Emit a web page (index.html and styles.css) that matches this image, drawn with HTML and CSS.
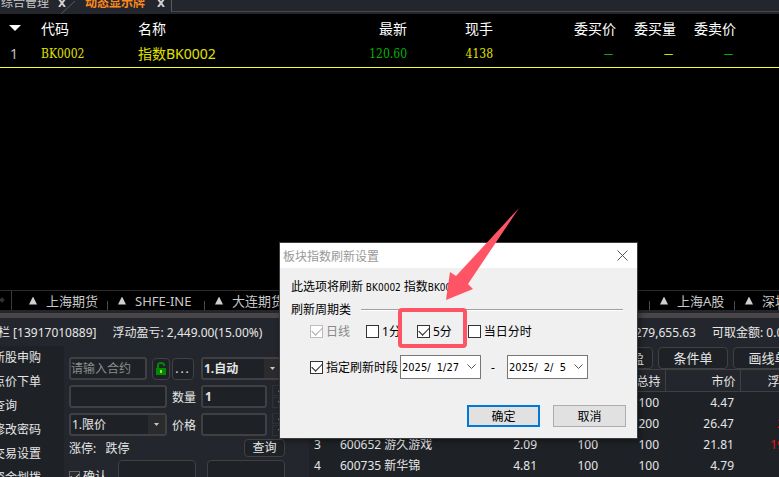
FILE: index.html
```
<!DOCTYPE html>
<html lang="zh-CN">
<head>
    <meta charset="UTF-8">
    <meta name="viewport" content="width=device-width, initial-scale=1.0">
    <title>动态显示牌</title>
    <link rel="stylesheet" href="styles.css">
</head>
<body>
    <div class="terminal">
        <nav class="top-tabs">
            <a href="#" class="top-tab">综合管理</a>
            <button class="tab-close" aria-label="关闭综合管理"><svg width="8" height="8" viewBox="0 0 8 8"><path d="M1 0l6 8M7 0L1 8"/></svg></button>
            <svg class="slant" width="16" height="13" viewBox="0 0 16 13"><path d="M1 13L15 0"/></svg>
            <a href="#" class="top-tab active">动态显示牌</a>
            <button class="tab-close" aria-label="关闭动态显示牌"><svg width="8" height="8" viewBox="0 0 8 8"><path d="M1 0l6 8M7 0L1 8"/></svg></button>
            <span class="tabs-rest"></span>
        </nav>

        <main class="board">
            <table class="quotes">
                <colgroup>
                    <col class="q-index"><col class="q-code"><col class="q-name"><col class="q-last"><col class="q-hand"><col class="q-bid"><col class="q-vol"><col class="q-vol"><col>
                </colgroup>
                <thead>
                    <tr>
                        <th><svg width="12" height="6" viewBox="0 0 12 6"><path d="M0 0h12L6 6z" fill="#fff"/></svg></th>
                        <th>代码</th>
                        <th>名称</th>
                        <th class="num">最新</th>
                        <th class="num">现手</th>
                        <th class="num">委买价</th>
                        <th class="num">委买量</th>
                        <th class="num">委卖价</th>
                        <th></th>
                    </tr>
                </thead>
                <tbody>
                    <tr>
                        <td class="index">1</td>
                        <td class="yellow digits">BK0002</td>
                        <td class="yellow">指数BK0002</td>
                        <td class="num green digits">120.60</td>
                        <td class="num yellow digits">4138</td>
                        <td class="num green dash">—</td>
                        <td class="num yellow dash">—</td>
                        <td class="num green dash">—</td>
                        <td></td>
                    </tr>
                </tbody>
            </table>
        </main>

        <nav class="markets">
            <span class="scroll-arrow"></span>
            <a href="#" class="market first">上海期货</a>
            <a href="#" class="market">SHFE-INE</a>
            <a href="#" class="market">大连期货</a>
            <span class="fill"></span>
            <a href="#" class="market">行业</a>
            <a href="#" class="market short">上海A股</a>
            <a href="#" class="market last">深圳A股</a>
        </nav>

        <div class="account">
            <span>栏 [13917010889]</span>
            <span>浮动盈亏: 2,449.00(15.00%)</span>
            <span class="fill"></span>
            <span>279,655.63</span>
            <span class="available">可取金额: 0.00</span>
        </div>

        <div class="trade">
            <nav class="side-menu">
                <a href="#">新股申购</a>
                <a href="#">点价下单</a>
                <a href="#">查询</a>
                <a href="#">修改密码</a>
                <a href="#">交易设置</a>
                <a href="#">资金划拨</a>
            </nav>

            <form class="order">
                <div class="order-row">
                    <input class="contract" type="text" placeholder="请输入合约" aria-label="合约">
                    <button type="button" class="small-btn lock" aria-label="锁定">
                        <svg width="12" height="14" viewBox="0 0 12 14"><path d="M3 7V3q0-2 3-2t3 2v1" fill="none" stroke="#008a00" stroke-width="2"/><path d="M1 6h10v7H1z" fill="#008a00"/><path d="M5 8h2v3H5z" fill="#a6d83c"/></svg>
                    </button>
                    <button type="button" class="small-btn more">...</button>
                    <span class="drop wide">
                        <select aria-label="开平"><option>1.自动</option></select>
                        <svg width="5" height="3" viewBox="0 0 5 3"><path d="M0 0h5L2.500 3z"/></svg>
                    </span>
                </div>
                <div class="order-row">
                    <input class="field" type="text" aria-label="名称">
                    <label for="amount">数量</label>
                    <input id="amount" class="value" type="text" value="1">
                    <span class="spinner"><button type="button" aria-label="增加数量"></button><button type="button" class="down" aria-label="减少数量"></button></span>
                </div>
                <div class="order-row">
                    <span class="drop">
                        <select aria-label="价格类型"><option>1.限价</option></select>
                        <svg width="5" height="3" viewBox="0 0 5 3"><path d="M0 0h5L2.500 3z"/></svg>
                    </span>
                    <label for="price">价格</label>
                    <input id="price" class="value" type="text">
                    <span class="spinner"><button type="button" aria-label="提高价格"></button><button type="button" class="down" aria-label="降低价格"></button></span>
                </div>
                <div class="limits">
                    <span>涨停:&nbsp;&nbsp; 跌停</span>
                    <button type="button" class="outline-btn">查询</button>
                </div>
                <div class="actions">
                    <label class="confirm"><input type="checkbox" checked>确认</label>
                    <button type="button" class="outline-btn" aria-label="买入"></button>
                    <button type="button" class="outline-btn" aria-label="卖出"></button>
                </div>
            </form>

            <section class="positions">
                <div class="toolbar">
                    <button class="outline-btn">止损止盈</button>
                    <button class="outline-btn">条件单</button>
                    <button class="outline-btn">画线单</button>
                </div>
                <table class="holdings">
                    <colgroup>
                        <col class="h-index"><col class="h-name"><col class="h-cost"><col class="h-count"><col class="h-count"><col class="h-price"><col class="h-price">
                    </colgroup>
                    <thead>
                        <tr><th></th><th></th><th></th><th></th><th>总持</th><th>市价</th><th>浮盈</th></tr>
                    </thead>
                    <tbody>
                        <tr><td></td><td></td><td></td><td></td><td>100</td><td>4.47</td><td></td></tr>
                        <tr><td></td><td></td><td></td><td></td><td>200</td><td>26.47</td><td class="red">2.00</td></tr>
                        <tr><td>3</td><td>600652 游久游戏</td><td>2.09</td><td>100</td><td>100</td><td>21.81</td><td class="red">19.72</td></tr>
                        <tr><td>4</td><td>600735 新华锦</td><td>4.81</td><td>100</td><td>100</td><td>4.79</td><td></td></tr>
                    </tbody>
                </table>
            </section>
        </div>
    </div>

    <div class="dialog" role="dialog" aria-labelledby="dialogTitle">
        <div class="dialog-title">
            <span id="dialogTitle">板块指数刷新设置</span>
            <button class="dialog-close" aria-label="关闭"><svg width="11" height="11" viewBox="0 0 11 11"><path d="M.5.5l10 10M10.500.5l-10 10"/></svg></button>
        </div>
        <form class="dialog-body">
            <p>此选项将刷新<span class="latin"> BK0002 </span>指数<span class="latin">BK0002</span></p>
            <div class="group-title"><span>刷新周期类</span><hr></div>
            <div class="periods">
                <label class="disabled"><input type="checkbox" checked disabled>日线</label>
                <label><input type="checkbox">1分</label>
                <label><input type="checkbox" checked>5分</label>
                <label><input type="checkbox">当日分时</label>
            </div>
            <div class="range">
                <label><input type="checkbox" checked>指定刷新时段</label>
                <span class="date">
                    <select aria-label="开始日期"><option>2025/&nbsp; 1/27</option></select>
                    <svg width="9" height="6" viewBox="0 0 9 6"><path d="M.5.5l4 4 4-4"/></svg>
                </span>
                <span class="to">-</span>
                <span class="date">
                    <select aria-label="结束日期"><option>2025/&nbsp; 2/&nbsp; 5</option></select>
                    <svg width="9" height="6" viewBox="0 0 9 6"><path d="M.5.5l4 4 4-4"/></svg>
                </span>
            </div>
            <div class="dialog-buttons">
                <button type="button" class="primary">确定</button>
                <button type="button">取消</button>
            </div>
        </form>
        <svg class="marker" width="122" height="142" viewBox="0 0 122 142">
            <path d="M121 0L58 68l-6-4-4 28 27-11-5-5z" fill="#ff5465"/>
            <rect x="2" y="102" width="65" height="36" rx="2" fill="none" stroke="#ff5465" stroke-width="4"/>
        </svg>
    </div>
</body>
</html>
```

FILE: styles.css
```
* {
    margin: 0;
    padding: 0;
    box-sizing: border-box;
}

body {
    font-family: "Noto Sans", "Noto Sans CJK SC", sans-serif;
    font-size: 12px;
    background-color: #000;
    color: #e6e6e6;
    overflow: hidden;
}

a {
    color: inherit;
    text-decoration: none;
}

button,
input,
select {
    font: inherit;
    color: inherit;
    border-radius: 0;
}

.terminal {
    display: flex;
    flex-direction: column;
    height: 100vh;
    white-space: nowrap;
    overflow: hidden;
}

.fill {
    flex: 1;
}

/* page tabs */
.top-tabs {
    display: flex;
    align-items: flex-end;
    flex: none;
    height: 14px;
    background-color: #23262c;
    overflow: hidden;
}

.top-tab {
    line-height: 18px;
    margin-bottom: 2px;
    padding-left: 1px;
    color: #c8c8c8;
}

.top-tab.active {
    margin-left: 8px;
    color: #ff8a1c;
    font-weight: bold;
}

.tab-close {
    width: 8px;
    height: 8px;
    margin: 0 0 7px 9px;
    border: none;
    background: none;
    line-height: 0;
}

.active + .tab-close {
    margin-left: 12px;
}

.tab-close path {
    fill: none;
    stroke: #d0d0d0;
    stroke-width: 2;
}

.slant {
    margin-left: -6px;
}

.slant path {
    fill: none;
    stroke: #5c5a5e;
}

.tabs-rest {
    flex: 1;
    height: 20px;
    margin: 0 0 2px 6px;
    border-left: 1px solid #5c5a5e;
    border-bottom: 1px solid #4a484c;
}

/* quote board */
.board {
    flex: 1;
    min-height: 0;
    overflow: hidden;
}

table {
    border-collapse: collapse;
    table-layout: fixed;
}

.quotes {
    width: 100%;
    font-size: 14px;
}

.q-index { width: 41px; }
.q-code { width: 97px; }
.q-name { width: 162px; }
.q-last { width: 107px; }
.q-hand { width: 86px; }
.q-bid { width: 123px; }
.q-vol { width: 60px; }

.quotes th {
    height: 28px;
    font-weight: normal;
    text-align: left;
    color: #fff;
}

.quotes th:first-child {
    padding-left: 9px;
}

.quotes th svg {
    display: block;
}

.quotes td {
    height: 25px;
    line-height: 20px;
    border-bottom: 1px solid #ffff22;
}

.quotes .num {
    text-align: right;
}

.quotes .index {
    padding-left: 10px;
    color: #c0c0c0;
}

.quotes .digits {
    font-family: "DejaVu Serif Condensed", "DejaVu Serif", serif;
    font-size: 12px;
}

.quotes .dash {
    padding-right: 3px;
    font-size: 9px;
    font-weight: bold;
}

.yellow { color: #e0e000; }
.green { color: #00b400; }
.holdings .red { color: #f01414; }

/* market tabs */
.markets {
    display: flex;
    flex: none;
    height: 23px;
    border-top: 1px solid #2c2c2c;
    border-bottom: 3px solid #23262c;
    font-size: 13px;
    line-height: 18px;
    color: #c8c8c8;
}

.scroll-arrow {
    width: 11px;
    height: 19px;
}

.scroll-arrow::before {
    content: "";
    display: block;
    width: 4px;
    height: 4px;
    margin-top: 7px;
    transform: rotate(45deg);
    background-color: #333;
}

.market {
    display: flex;
    align-items: center;
    gap: 9px;
    min-width: 97px;
    padding: 0 9px 0 10px;
    background: linear-gradient(#4a4a4a, #4a4a4a) right bottom / 1px 9px no-repeat;
}

.market.first {
    padding-left: 17px;
    border-left: 1px solid #3a3a3a;
}

.market.short {
    min-width: 85px;
}

.market.last {
    width: 44px;
    min-width: 0;
    overflow: hidden;
}

.market::before {
    content: "";
    flex: none;
    width: 8px;
    height: 8px;
    background-color: #d0d0d0;
    clip-path: polygon(50% 0, 100% 100%, 0 100%);
}

/* account line */
.account {
    display: flex;
    align-items: center;
    gap: 16px;
    flex: none;
    height: 33px;
    border-top: 5px solid #4a4648;
    background-color: #23262c;
}

.account span:first-child {
    margin-left: -2px;
}

.account .fill {
    margin: 0 -16px;
}

.available {
    width: 67px;
    overflow: hidden;
}

/* trade area */
.trade {
    display: flex;
    flex: none;
    height: 131px;
    background-color: #23262c;
    overflow: hidden;
}

.side-menu {
    display: flex;
    flex-direction: column;
    flex: none;
    width: 71px;
    margin-left: -7px;
    background-color: #1e2226;
}

.side-menu a {
    flex: none;
    line-height: 24px;
}

.order {
    display: flex;
    flex-direction: column;
    gap: 5px;
    flex: none;
    width: 245px;
    padding: 11px 22px 0 5px;
}

.order-row {
    display: flex;
    align-items: center;
    flex: none;
    gap: 5px;
    height: 23px;
}

.order input[type="text"],
.drop {
    height: 23px;
    border: 2px solid #403f41;
    border-radius: 3px;
    background-color: #1e2226;
}

.order input::placeholder {
    color: #8c8c8c;
    opacity: 1;
}

.order .contract {
    width: 78px;
}

.field,
.drop {
    width: 98px;
}

.order-row label {
    width: 24px;
}

.order-row .value {
    width: 66px;
    padding-left: 2px;
    font-weight: bold;
}

.small-btn,
.outline-btn {
    border: 1px solid #414042;
    border-radius: 4px;
    background-color: #1e2226;
}

.small-btn {
    width: 22px;
    height: 22px;
}

.small-btn.lock {
    width: 18px;
    line-height: 0;
}

.small-btn.more {
    margin-left: -3px;
    letter-spacing: 2px;
}

.drop {
    display: flex;
    align-items: center;
    flex: none;
}

.drop.wide {
    width: 82px;
    margin-left: 2px;
    font-weight: bold;
}

.drop select {
    flex: 1;
    min-width: 0;
    height: 19px;
    padding-left: 1px;
    border: none;
    background: none;
    appearance: none;
}

.drop svg {
    box-sizing: content-box;
    padding: 8px 6px;
    background-color: #2b2b2e;
    fill: #c8c8c8;
}

.spinner {
    display: flex;
    flex-direction: column;
    gap: 1px;
}

.spinner button {
    width: 16px;
    height: 11px;
    border: 1px solid #303236;
    background: none;
}

.spinner button::before {
    content: "";
    display: block;
    width: 5px;
    height: 3px;
    margin: 0 auto;
    background-color: #808080;
    clip-path: polygon(50% 0, 100% 100%, 0 100%);
}

.spinner .down::before {
    clip-path: polygon(0 0, 100% 0, 50% 100%);
}

.limits {
    display: flex;
    align-items: center;
    justify-content: space-between;
    flex: none;
    height: 18px;
    margin-top: -2px;
}

.limits .outline-btn {
    width: 41px;
    height: 18px;
    margin-right: 2px;
    line-height: 16px;
}

.actions {
    display: flex;
    gap: 11px;
    flex: none;
    margin-top: -2px;
}

.actions .outline-btn {
    width: 78px;
    height: 28px;
    flex: none;
}

.confirm {
    display: flex;
    align-items: center;
    gap: 3px;
    width: 38px;
    height: 32px;
}

/* checkboxes */
input[type="checkbox"] {
    appearance: none;
    flex: none;
    width: 13px;
    height: 13px;
    border: 1px solid #333;
    background-color: #fff;
}

input[type="checkbox"]:checked::before {
    content: "";
    display: block;
    width: 9px;
    height: 5px;
    margin: 1px;
    border-left: 1px solid #222;
    border-bottom: 1px solid #222;
    transform: rotate(-45deg);
}

input[type="checkbox"]:disabled {
    border-color: #bcbcbc;
}

input[type="checkbox"]:disabled::before {
    border-color: #a8a8a8;
}

.confirm input[type="checkbox"] {
    width: 11px;
    height: 11px;
    border-color: #666;
    background-color: #2b2b2e;
}

.confirm input[type="checkbox"]:checked::before {
    width: 7px;
    height: 4px;
    border-color: #ccc;
}

/* positions */
.positions {
    flex: 1;
    min-width: 0;
    overflow: hidden;
    background-color: #1e2226;
}

.toolbar {
    display: flex;
    align-items: center;
    gap: 5px;
    height: 23px;
    padding-left: 274px;
    background-color: #23262c;
    font-size: 13px;
}

.toolbar .outline-btn {
    flex: none;
    width: 70px;
    height: 22px;
    line-height: 18px;
}

.h-index { width: 26px; }
.h-name { width: 135px; }
.h-cost { width: 73px; }
.h-count { width: 61px; }
.h-price { width: 75px; }

.holdings {
    width: 506px;
}

.holdings th {
    height: 22px;
    padding-right: 4px;
    border-top: 1px solid #403f41;
    border-bottom: 1px solid #403f41;
    border-right: 1px solid #403f41;
    background-color: #23262c;
    font-weight: normal;
    text-align: right;
}

.holdings th:last-child {
    padding-right: 23px;
}

.holdings td {
    height: 21px;
    padding-right: 6px;
    text-align: right;
}

.holdings td:first-child,
.holdings td:nth-child(2) {
    padding: 0 0 0 5px;
    text-align: left;
}

.holdings td:last-child {
    padding-right: 14px;
}

/* refresh dialog, floats over the terminal */
.dialog {
    position: absolute;
    left: 279px;
    top: 242px;
    width: 359px;
    border: 1px solid #3c3c3c;
    background-color: #f0f0f0;
    color: #000;
    box-shadow: 2px 2px 6px rgba(0, 0, 0, 0.4);
}

.dialog-title {
    display: flex;
    align-items: center;
    justify-content: space-between;
    height: 25px;
    padding: 0 9px 0 3px;
    background-color: #fff;
    color: #999;
}

.dialog-close {
    width: 11px;
    height: 11px;
    border: none;
    background: none;
    line-height: 0;
}

.dialog-close path,
.date path {
    fill: none;
    stroke: #555;
}

.dialog-body {
    padding: 8px 11px 11px;
}

.dialog-body p,
.group-title {
    line-height: 22px;
}

.latin {
    font-family: "DejaVu Sans Condensed", "DejaVu Sans", sans-serif;
    font-size: 10px;
}

.group-title {
    display: flex;
    align-items: center;
    gap: 10px;
    padding-right: 3px;
}

.group-title hr {
    flex: 1;
    border: none;
    border-top: 1px solid #a0a0a0;
    border-bottom: 1px solid #fff;
}

.periods,
.range {
    display: flex;
    align-items: center;
    padding-left: 19px;
}

.periods {
    gap: 16px;
    height: 20px;
}

.periods label,
.range label {
    display: flex;
    align-items: center;
    gap: 3px;
}

.periods .disabled {
    color: #888;
}

.range {
    height: 24px;
    margin-top: 14px;
}

.date {
    display: flex;
    align-items: center;
    width: 81px;
    height: 24px;
    margin-left: 2px;
    padding-right: 4px;
    border: 1px solid #777;
    background-color: #fff;
}

.date select {
    flex: 1;
    min-width: 0;
    border: none;
    background: none;
    appearance: none;
    padding-left: 1px;
    font-family: "DejaVu Sans Condensed", "DejaVu Sans", sans-serif;
    font-size: 11px;
}

.to {
    width: 24px;
    text-align: center;
}

.dialog-buttons {
    display: flex;
    justify-content: flex-end;
    gap: 13px;
    margin-top: 26px;
}

.dialog-buttons button {
    width: 73px;
    height: 22px;
    border: 1px solid #adadad;
    background-color: #e1e1e1;
}

.dialog-buttons .primary {
    border: 2px solid #0078d7;
}

/* arrow and frame that point at the 5分 option */
.marker {
    position: absolute;
    left: 118px;
    top: -35px;
    pointer-events: none;
}
```
